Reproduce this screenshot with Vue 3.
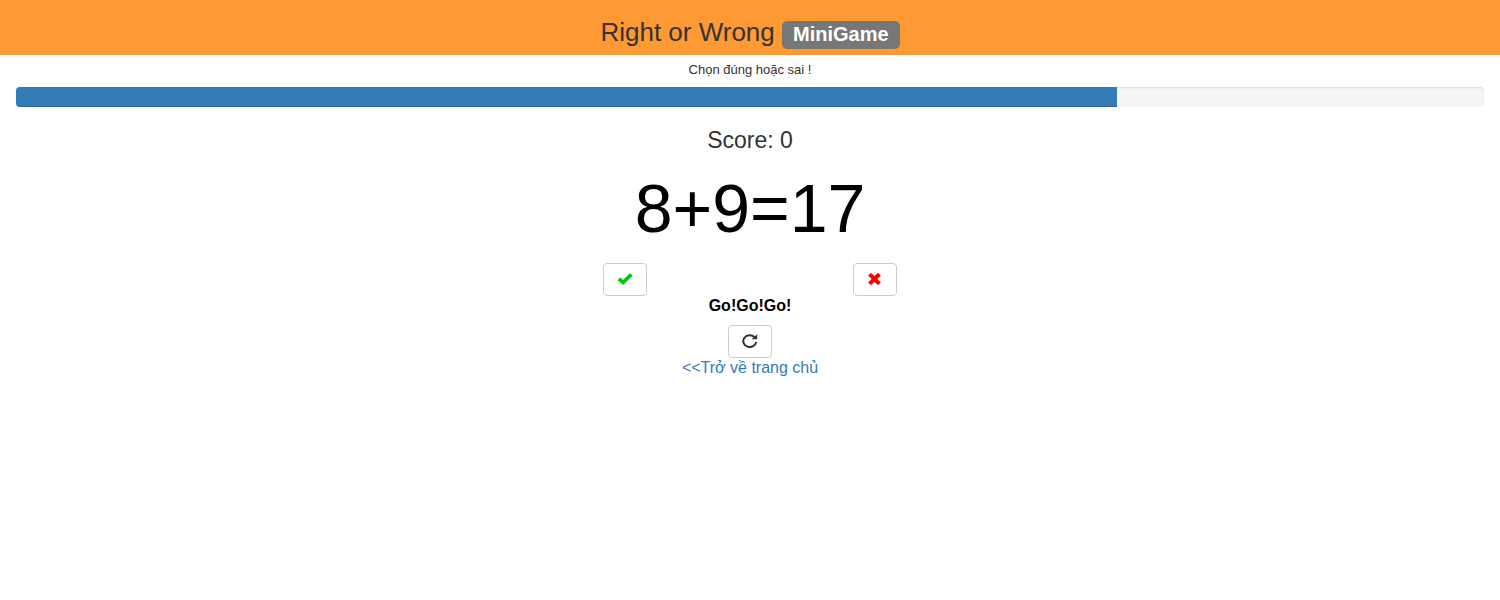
<script setup>
import { ref } from 'vue'

const score = ref(0)
const timeLeft = ref(75)
const question = ref('8+9=17')
const message = ref('Go!Go!Go!')
</script>

<template>
  <div class="game">
    <header class="banner">
      <h1>Right or Wrong <span class="label">MiniGame</span></h1>
    </header>
    <main>
      <p class="hint">Chọn đúng hoặc sai !</p>
      <div class="progress" role="progressbar" aria-label="Time left" :aria-valuenow="timeLeft">
        <div class="bar" :style="{ width: timeLeft + '%' }"></div>
      </div>
      <h2 class="score">Score: {{ score }}</h2>
      <div class="question">{{ question }}</div>
      <div class="answers">
        <div class="cell">
          <button type="button" class="btn" aria-label="Đúng">
            <svg class="right" width="16" height="12" viewBox="0 0 16 12" aria-hidden="true">
              <path d="M0.9 6.8 2.9 4.8Q3.3 4.4 3.7 4.8L6 7 12.6 0.6Q13 0.2 13.4 0.6L15.5 2.3Q15.9 2.7 15.5 3.1L6.6 11.4Q6.1 11.8 5.6 11.4L0.9 7.5Q0.5 7.1 0.9 6.8Z" />
            </svg>
          </button>
        </div>
        <div class="cell">
          <button type="button" class="btn" aria-label="Sai">
            <svg class="wrong" width="14" height="12" viewBox="0 0 14 12" aria-hidden="true">
              <path d="M3.4 0.2 6.5 3 9.6 0.2Q10 0 10.4 0.3L12.6 2.2Q13 2.6 12.6 3L9.3 6 12.6 9Q13 9.4 12.6 9.8L10.4 11.7Q10 12 9.6 11.8L6.5 9 3.4 11.8Q3 12 2.6 11.7L0.4 9.8Q0 9.4 0.4 9L3.7 6 0.4 3Q0 2.6 0.4 2.2L2.6 0.3Q3 0 3.4 0.2Z" />
            </svg>
          </button>
        </div>
      </div>
      <p class="message">{{ message }}</p>
      <button type="button" class="btn" aria-label="Chơi lại">
        <svg class="repeat" width="16" height="14" viewBox="0 0 16 14" aria-hidden="true">
          <path class="arc" d="M12.6 3.2A6.5 5.9 0 1 0 14.2 7.8" />
          <path d="M15.2 0.2V5.2H9.6Z" />
        </svg>
      </button>
      <a class="home" href="#">&lt;&lt;Trở về trang chủ</a>
    </main>
  </div>
</template>

<style>
body {
  margin: 0;
  background: #fff;
}
</style>

<style scoped>
.game {
  font-family: "Liberation Sans", Arial, sans-serif;
  text-align: center;
  color: #333;
}
.banner {
  background: #f93;
  padding: 15px 16px 6px;
}
h1 {
  margin: 0;
  font-size: 26px;
  line-height: 34px;
  font-weight: 400;
}
.label {
  display: inline-block;
  box-sizing: border-box;
  height: 28px;
  padding: 0 11px;
  border-radius: 5px;
  background: #777;
  color: #fff;
  font-size: 20px;
  line-height: 27px;
  font-weight: 700;
}
main {
  display: flex;
  flex-direction: column;
  align-items: center;
  padding: 0 16px;
}
.hint {
  margin: 5px 0 7px;
  font-size: 13px;
  line-height: 20px;
}
.progress {
  width: 100%;
  height: 20px;
  overflow: hidden;
  border-radius: 4px;
  background: #f5f5f5;
  box-shadow: inset 0 1px 2px rgba(0, 0, 0, 0.1);
}
.bar {
  height: 100%;
  background: #337ab7;
  box-shadow: inset 0 -1px 0 rgba(0, 0, 0, 0.15);
}
.score {
  margin: 20px 0 16px;
  font-size: 23px;
  line-height: 26px;
  font-weight: 400;
}
.question {
  font-size: 68px;
  line-height: 78px;
  color: #000;
}
.answers {
  display: grid;
  grid-template-columns: 1fr 1fr;
  width: 100%;
  max-width: 500px;
  margin-top: 16px;
}
.btn {
  display: inline-flex;
  align-items: center;
  justify-content: center;
  box-sizing: border-box;
  width: 44px;
  height: 33px;
  padding: 0 0 2px;
  border: 1px solid #ccc;
  border-radius: 4px;
  background: #fff;
  color: #333;
  vertical-align: top;
  cursor: pointer;
}
svg {
  fill: currentColor;
}
.right {
  color: #0c0;
}
.wrong {
  color: #f00;
}
.arc {
  fill: none;
  stroke: currentColor;
  stroke-width: 2;
}
.message {
  margin: 0 0 9px;
  font-size: 16px;
  line-height: 20px;
  font-weight: 700;
  color: #000;
}
.home {
  font-size: 16px;
  line-height: 20px;
  color: #337ab7;
  text-decoration: none;
}
</style>
